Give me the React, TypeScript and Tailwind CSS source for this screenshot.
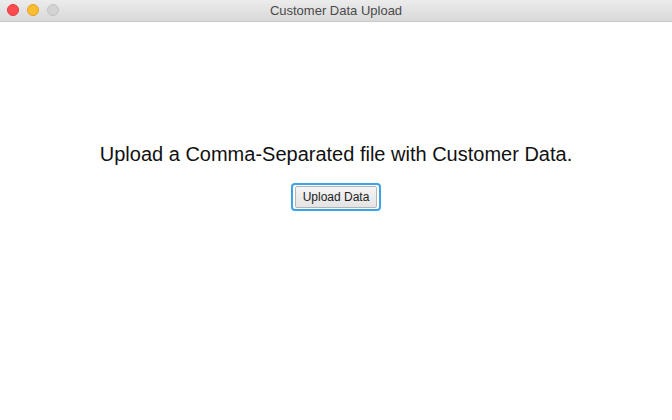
export default function App() {
  return (
    <div className="w-[672px] h-[420px] bg-white flex flex-col overflow-hidden" style={{ fontFamily: '"Liberation Sans", Arial, sans-serif' }}>
      {/* Title bar */}
      <div className="relative h-[22px] shrink-0 bg-gradient-to-b from-[#ececec] to-[#d9d9d9] border-b border-[#c8c8c8] flex items-center justify-center">
        <div className="absolute left-[7px] top-[4px] flex gap-[8px]">
          <span className="w-[12px] h-[12px] rounded-full bg-[#fc4a4f] border border-[#e0393e]" />
          <span className="w-[12px] h-[12px] rounded-full bg-[#fdbd2e] border border-[#e0a028]" />
          <span className="w-[12px] h-[12px] rounded-full bg-[#d3d3d3] border border-[#c2c2c2]" />
        </div>
        <span className="text-[13px] text-[#4a4a4a]">Customer Data Upload</span>
      </div>

      {/* Content */}
      <div className="flex flex-col items-center pt-[118px]">
        <p className="text-[20px] text-[#111] leading-[28px]">Upload a Comma-Separated file with Customer Data.</p>
        <button className="mt-[15px] h-[28px] px-[2px] rounded-[4px] border-2 border-[#3aa4e6] bg-transparent">
          <span className="block h-[22px] px-[7px] rounded-[2px] border border-[#b5b5b5] bg-gradient-to-b from-[#f5f5f5] to-[#e4e4e4] text-[12px] leading-[20px] text-[#222]">
            Upload Data
          </span>
        </button>
      </div>
    </div>
  );
}
